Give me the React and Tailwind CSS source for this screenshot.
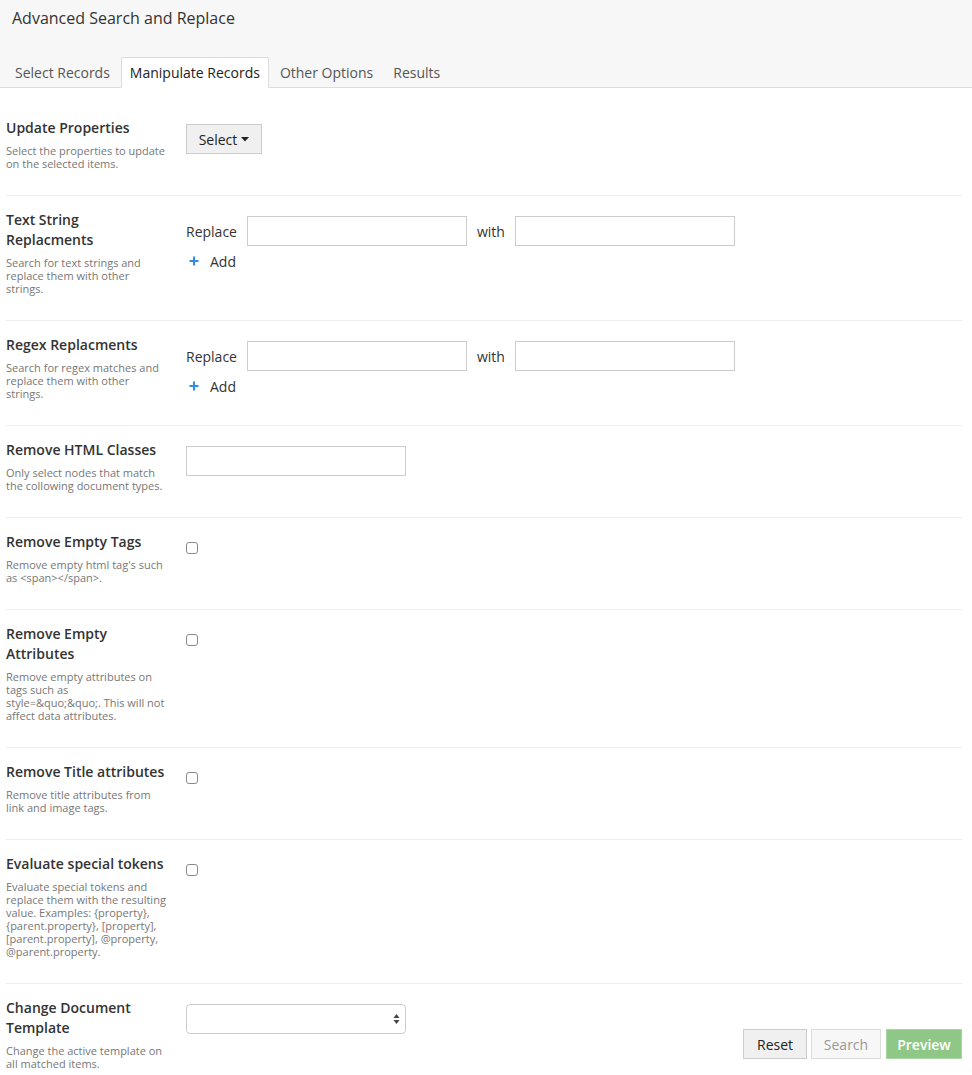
import React from "react";

function Section({ title, desc, children, last }) {
  return (
    <div className={"flex pt-[14px] pb-[25px] " + (last ? "" : "border-b border-[#eeeeee]")}>
      <div className="w-[160px] shrink-0 mr-[20px]">
        <div className="text-[14px] leading-[20px] font-semibold text-[#333]">{title}</div>
        <div className="mt-[6px] text-[11px] leading-[13px] text-[#777]">{desc}</div>
      </div>
      {children}
    </div>
  );
}

function PlusIcon() {
  return (
    <svg width="10" height="10" viewBox="0 0 10 10" className="block">
      <path d="M5 0.5V9.5M0.5 5H9.5" stroke="#2f8de4" strokeWidth="2" />
    </svg>
  );
}

function ReplaceBlock() {
  return (
    <div className="mt-[6px]">
      <div className="flex items-center gap-[10px] text-[14px] text-[#333]">
        <span>Replace</span>
        <input className="w-[220px] h-[30px] border border-[#ccc] bg-white outline-none" />
        <span>with</span>
        <input className="w-[220px] h-[30px] border border-[#ccc] bg-white outline-none" />
      </div>
      <div className="mt-[5px] h-[20px] flex items-center text-[14px] text-[#333]">
        <span className="ml-[3px] mr-[11px]">
          <PlusIcon />
        </span>
        <span>Add</span>
      </div>
    </div>
  );
}

function Checkbox() {
  return <div className="mt-[10px] w-[12px] h-[12px] border border-[#8a8a8a] rounded-[3px] bg-white" />;
}

export default function App() {
  return (
    <div className="min-h-screen bg-white" style={{ fontFamily: '"Open Sans", "Liberation Sans", sans-serif' }}>
      <div className="bg-[#f7f7f7] border-b border-[#dddddd]">
        <div className="pl-[12px] pt-[7px] text-[16px] leading-[22px] text-[#333]">Advanced Search and Replace</div>
        <div className="flex pl-[6px] mt-[28px] text-[14px] leading-[20px]">
          {["Select Records", "Manipulate Records", "Other Options", "Results"].map((t) => {
            const active = t === "Manipulate Records";
            return (
              <div
                key={t}
                className={
                  "mr-[2px] px-[8px] h-[31px] flex items-center -mb-px border " +
                  (active
                    ? "bg-white border-[#dddddd] border-b-white text-[#222]"
                    : "border-transparent text-[#555]")
                }
              >
                {t}
              </div>
            );
          })}
        </div>
      </div>

      <div className="pt-[16px] pl-[6px] pr-[10px]">
        <Section
          title="Update Properties"
          desc="Select the properties to update on the selected items."
        >
          <div className="mt-[6px]">
            <div className="h-[30px] w-[76px] flex items-center justify-center gap-[4px] bg-[#f0f0f0] border border-[#cccccc] text-[14px] text-[#222]">
              <span>Select</span>
              <svg width="8" height="5" viewBox="0 0 8 5">
                <path d="M0 0H8L4 4.5Z" fill="#222" />
              </svg>
            </div>
          </div>
        </Section>

        <Section
          title="Text String Replacments"
          desc="Search for text strings and replace them with other strings."
        >
          <ReplaceBlock />
        </Section>

        <Section
          title="Regex Replacments"
          desc="Search for regex matches and replace them with other strings."
        >
          <ReplaceBlock />
        </Section>

        <Section
          title="Remove HTML Classes"
          desc="Only select nodes that match the collowing document types."
        >
          <div className="mt-[6px]">
            <input className="w-[220px] h-[30px] border border-[#ccc] bg-white outline-none" />
          </div>
        </Section>

        <Section title="Remove Empty Tags" desc="Remove empty html tag's such as <span></span>.">
          <Checkbox />
        </Section>

        <Section
          title="Remove Empty Attributes"
          desc={
            <>
              Remove empty attributes on tags such as
              <br />
              style=&amp;quo;&amp;quo;. This will not affect data attributes.
            </>
          }
        >
          <Checkbox />
        </Section>

        <Section
          title="Remove Title attributes"
          desc="Remove title attributes from link and image tags."
        >
          <Checkbox />
        </Section>

        <Section
          title="Evaluate special tokens"
          desc="Evaluate special tokens and replace them with the resulting value. Examples: {property}, {parent.property}, [property], [parent.property], @property, @parent.property."
        >
          <Checkbox />
        </Section>

        <Section
          title="Change Document Template"
          desc="Change the active template on all matched items."
          last
        >
          <div className="mt-[6px]">
            <div className="w-[220px] h-[30px] border border-[#cccccc] rounded-[4px] bg-white flex items-center justify-end pr-[5px]">
              <svg width="7" height="12" viewBox="0 0 7 12">
                <path d="M3.5 1L6.5 5H0.5Z" fill="#444" />
                <path d="M3.5 11L6.5 7H0.5Z" fill="#444" />
              </svg>
            </div>
          </div>
          <div className="ml-auto mt-[31px] flex gap-[4px] self-start text-[14px]">
            <div className="h-[30px] w-[64px] justify-center flex items-center bg-[#f0f0f0] border border-[#cccccc] text-[#222]">
              Reset
            </div>
            <div className="h-[30px] w-[70px] justify-center flex items-center bg-[#f7f7f7] border border-[#dddddd] text-[#999]">
              Search
            </div>
            <div className="h-[30px] w-[76px] ml-[1px] justify-center flex items-center bg-[#8fc786] border border-[#a9d4a2] text-white font-semibold">
              Preview
            </div>
          </div>
        </Section>
      </div>
    </div>
  );
}
